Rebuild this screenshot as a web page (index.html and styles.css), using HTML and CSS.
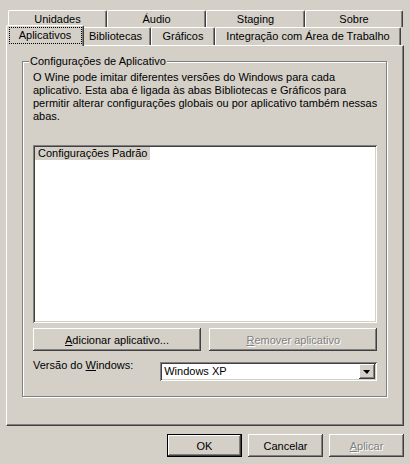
FILE: index.html
```html
<!DOCTYPE html>
<html lang="pt">
<head>
<meta charset="utf-8">
<title>Configuração do Wine</title>
<link rel="stylesheet" href="styles.css">
</head>
<body>
<div class="dialog">
  <div class="tabs">
    <div class="tab-row back">
      <div class="tab t-unid">Unidades</div>
      <div class="tab t-audio">Áudio</div>
      <div class="tab t-stag">Staging</div>
      <div class="tab t-sobre">Sobre</div>
    </div>
    <div class="tab-row front">
      <div class="tab sel t-apl"><span class="focus">Aplicativos</span></div>
      <div class="tab t-bib">Bibliotecas</div>
      <div class="tab t-graf">Gráficos</div>
      <div class="tab t-int">Integração com Área de Trabalho</div>
    </div>
  </div>
  <div class="panel">
    <fieldset class="group">
      <legend class="group-title">Configurações de Aplicativo</legend>
      <p class="desc">O Wine pode imitar diferentes versões do Windows para cada<br>aplicativo. Esta aba é ligada às abas Bibliotecas e Gráficos para<br>permitir alterar configurações globais ou por aplicativo também nessas<br>abas.</p>
      <div class="listbox">
        <div class="item">Configurações Padrão</div>
      </div>
      <div class="btn-row">
        <button class="btn wide"><u>A</u>dicionar aplicativo...</button>
        <button class="btn wide disabled"><u>R</u>emover aplicativo</button>
      </div>
      <div class="ver-row">
        <span class="ver-label">Versão do <u>W</u>indows:</span>
        <div class="combo">
          <span class="combo-text">Windows XP</span>
          <span class="combo-btn"><span class="arrow"></span></span>
        </div>
      </div>
    </fieldset>
  </div>
  <div class="footer">
    <button class="btn foot default">OK</button>
    <button class="btn foot">Cancelar</button>
    <button class="btn foot disabled"><u>A</u>plicar</button>
  </div>
</div>
</body>
</html>
```
FILE: styles.css
```css
html, body {
  margin: 0;
  padding: 0;
  background: #d4d0c8;
}
body {
  font-family: "Liberation Sans", Arial, sans-serif;
  font-size: 11px;
  color: #000;
  width: 410px;
  height: 464px;
  overflow: hidden;
}
.dialog {
  padding: 10px 6px 0 6px;
}
.tabs {
  display: flex;
  flex-direction: column;
}
.tab-row {
  display: flex;
  padding-left: 2px;
}
.tab-row.back {
  height: 17px;
}
.tab-row.front {
  height: 18px;
}
.tab {
  box-sizing: border-box;
  height: 18px;
  border-top: 1px solid #fff;
  border-left: 1px solid #fff;
  border-right: 1px solid #404040;
  box-shadow: inset -1px 0 #808080;
  border-radius: 2px 2px 0 0;
  background: #d4d0c8;
  text-align: center;
  line-height: 16px;
  white-space: nowrap;
}
.back .tab {
  height: 17px;
}
.t-unid, .t-audio, .t-stag { width: 99px; }
.t-sobre { width: 98px; }
.t-apl { width: 74px; }
.t-bib { width: 71px; }
.t-graf { width: 64px; }
.t-int { width: 186px; }
.tab.sel {
  position: relative;
  z-index: 2;
  width: 78px;
  height: 21px;
  margin: -2px -2px 0 -2px;
  padding-top: 2px;
  line-height: 15px;
}
.tab.sel + .tab {
  margin-left: -2px;
}
.focus {
  display: inline-block;
  outline: 1px dotted #000;
  outline-offset: 0;
  width: 71px;
  height: 15px;
  line-height: 15px;
}
.panel {
  box-sizing: border-box;
  width: 398px;
  height: 381px;
  border-top: 1px solid #fff;
  border-left: 1px solid #fff;
  border-right: 1px solid #404040;
  border-bottom: 1px solid #404040;
  box-shadow: inset -1px -1px #808080;
  padding: 9px 15px 0 15px;
}
.group {
  box-sizing: border-box;
  margin: 0;
  width: 365px;
  height: 342px;
  border: 1px solid #808080;
  box-shadow: inset 1px 1px #fff, 1px 1px #fff;
  padding: 0 9px 0 10px;
}
.group-title {
  padding: 0 1px;
  margin-left: -4px;
  line-height: 13px;
  background: #d4d0c8;
}
.desc {
  margin: 3px 0 0 0;
  line-height: 13px;
  white-space: nowrap;
}
.listbox {
  box-sizing: border-box;
  margin-top: 22px;
  height: 178px;
  background: #fff;
  box-shadow: inset 1px 1px #808080, inset -1px -1px #fff, inset 2px 2px #404040, inset -2px -2px #d4d0c8;
  padding: 2px;
}
.item {
  display: inline-block;
  background: #d4d0c8;
  line-height: 13px;
  padding: 0 3px;
}
.btn {
  box-sizing: border-box;
  font: inherit;
  color: #000;
  background: #d4d0c8;
  border: 0;
  padding: 0;
  height: 23px;
  box-shadow: inset -1px -1px #404040, inset 1px 1px #fff, inset -2px -2px #808080;
}
.btn.default {
  border: 1px solid #000;
}
.btn.disabled {
  color: #808080;
  text-shadow: 1px 1px 0 #fff;
}
.btn-row {
  display: flex;
  justify-content: space-between;
  margin-top: 5px;
}
.btn.wide {
  width: 168px;
}
.ver-row {
  display: flex;
  justify-content: space-between;
  margin-top: 11px;
}
.ver-label {
  line-height: 13px;
  margin-top: -3px;
}
.combo {
  box-sizing: border-box;
  width: 217px;
  height: 19px;
  background: #fff;
  box-shadow: inset 1px 1px #808080, inset -1px -1px #fff, inset 2px 2px #404040, inset -2px -2px #d4d0c8;
  display: flex;
  justify-content: space-between;
  padding: 2px;
}
.combo-text {
  padding-left: 2px;
  line-height: 15px;
}
.combo-btn {
  box-sizing: border-box;
  width: 16px;
  height: 15px;
  background: #d4d0c8;
  box-shadow: inset -1px -1px #404040, inset 1px 1px #fff, inset -2px -2px #808080;
  display: flex;
  align-items: center;
  justify-content: center;
}
.arrow {
  width: 0;
  height: 0;
  border-left: 4px solid transparent;
  border-right: 3px solid transparent;
  border-top: 4px solid #000;
  margin-left: -1px;
}
.footer {
  display: flex;
  justify-content: flex-end;
  gap: 6px;
  margin-top: 8px;
}
.btn.foot {
  width: 75px;
}
```
